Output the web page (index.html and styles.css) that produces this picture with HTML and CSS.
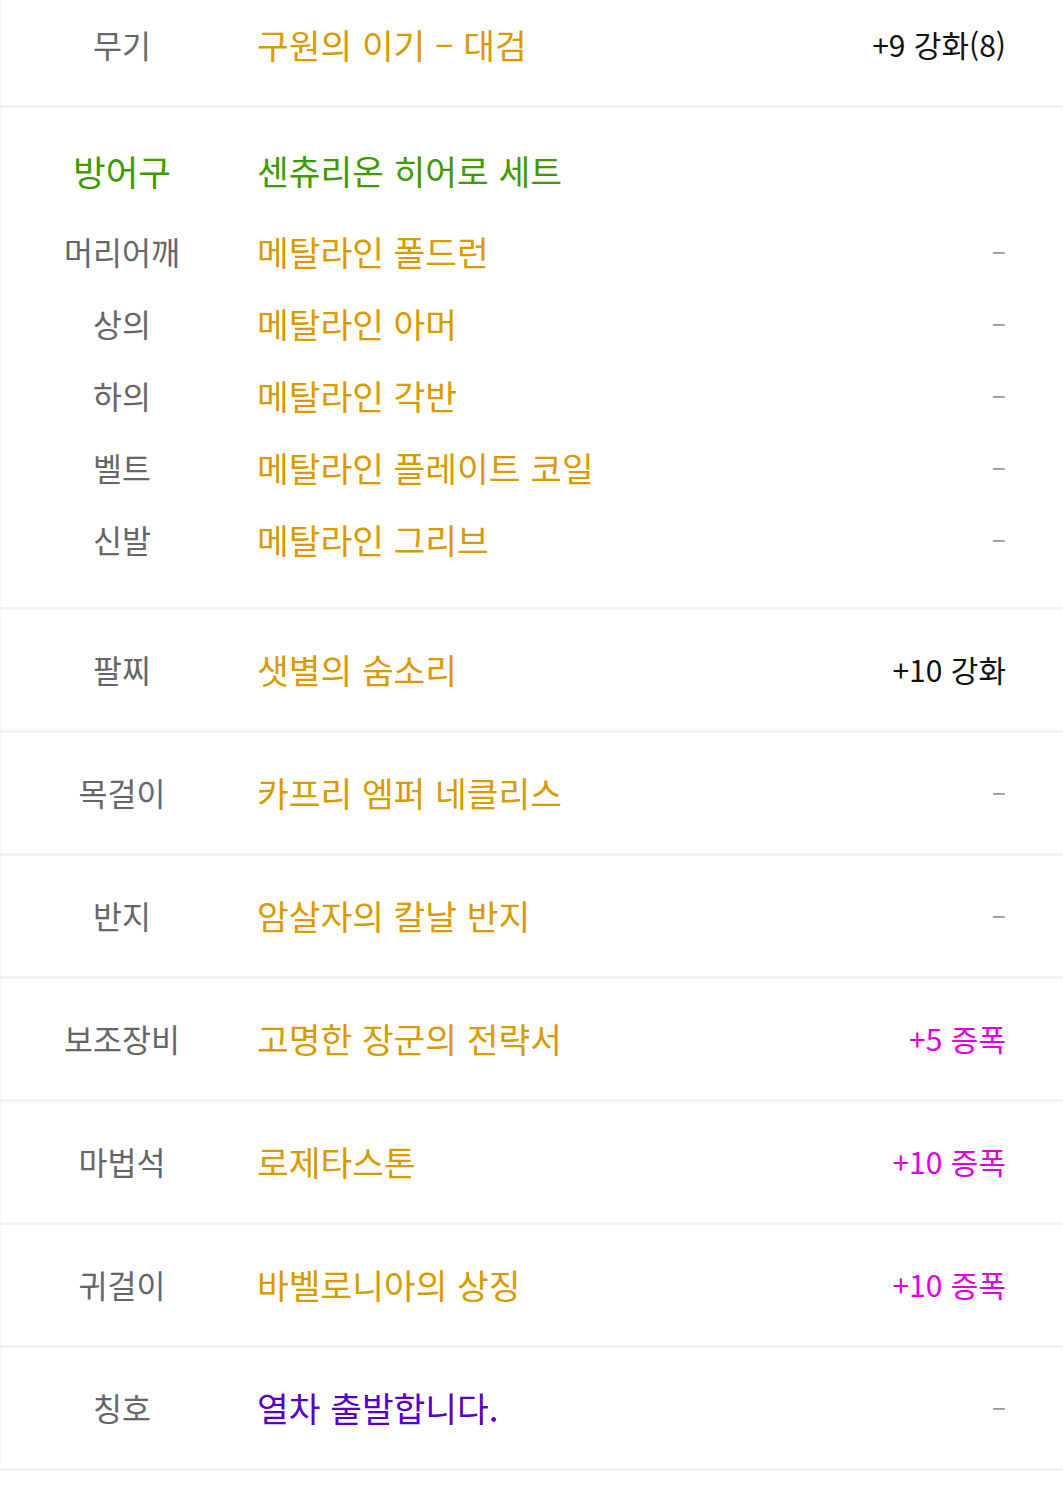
FILE: index.html
```html
<!DOCTYPE html>
<html lang="ko">
<head>
    <meta charset="UTF-8">
    <title>장비</title>
    <link rel="stylesheet" href="styles.css">
</head>
<body>
    <div class="equipList">
        <div class="row">
            <span class="slot">무기</span>
            <span class="itemName">구원의 이기 – 대검</span>
            <span class="extra">+9 강화(8)</span>
        </div>

        <div class="setBlock">
            <div class="setHead">
                <span class="setSlot">방어구</span>
                <span class="setName">센츄리온 히어로 세트</span>
            </div>
            <div class="subRow">
                <span class="slot">머리어깨</span>
                <span class="itemName">메탈라인 폴드런</span>
                <span class="extra dash">–</span>
            </div>
            <div class="subRow">
                <span class="slot">상의</span>
                <span class="itemName">메탈라인 아머</span>
                <span class="extra dash">–</span>
            </div>
            <div class="subRow">
                <span class="slot">하의</span>
                <span class="itemName">메탈라인 각반</span>
                <span class="extra dash">–</span>
            </div>
            <div class="subRow">
                <span class="slot">벨트</span>
                <span class="itemName">메탈라인 플레이트 코일</span>
                <span class="extra dash">–</span>
            </div>
            <div class="subRow">
                <span class="slot">신발</span>
                <span class="itemName">메탈라인 그리브</span>
                <span class="extra dash">–</span>
            </div>
        </div>

        <div class="row">
            <span class="slot">팔찌</span>
            <span class="itemName">샛별의 숨소리</span>
            <span class="extra">+10 강화</span>
        </div>
        <div class="row">
            <span class="slot">목걸이</span>
            <span class="itemName">카프리 엠퍼 네클리스</span>
            <span class="extra dash">–</span>
        </div>
        <div class="row">
            <span class="slot">반지</span>
            <span class="itemName">암살자의 칼날 반지</span>
            <span class="extra dash">–</span>
        </div>
        <div class="row">
            <span class="slot">보조장비</span>
            <span class="itemName">고명한 장군의 전략서</span>
            <span class="extra amp">+5 증폭</span>
        </div>
        <div class="row">
            <span class="slot">마법석</span>
            <span class="itemName">로제타스톤</span>
            <span class="extra amp">+10 증폭</span>
        </div>
        <div class="row">
            <span class="slot">귀걸이</span>
            <span class="itemName">바벨로니아의 상징</span>
            <span class="extra amp">+10 증폭</span>
        </div>
        <div class="row">
            <span class="slot">칭호</span>
            <span class="itemName title">열차 출발합니다.</span>
            <span class="extra dash">–</span>
        </div>
    </div>
</body>
</html>
```

FILE: styles.css
```css
*{
    margin: 0;
    padding: 0;
    box-sizing: border-box;
}
body{
    background-color: #fff;
    font-family: "Noto Sans CJK KR", "Noto Sans", sans-serif;
    overflow: hidden;
}
/* 목록이 살짝 스크롤된 상태 */
.equipList{
    margin-top: -15px;
}
.row, .subRow, .setHead{
    display: grid;
    grid-template-columns: 242px 1fr auto;
    column-gap: 14px;
    align-items: center;
    padding-right: 57px;
}
.row{
    height: 123px;
    padding-bottom: 2px;
    border-bottom: 3px solid #f2f2f2;
    border-left: 1px solid #f6f6f6;
}
.setBlock{
    padding: 26px 0 32px;
    border-bottom: 3px solid #f2f2f2;
    border-left: 1px solid #f6f6f6;
}
.setHead{
    height: 72px;
    margin-bottom: 9px;
}
.subRow{
    height: 72px;
}
.slot{
    text-align: center;
    font-size: 31.5px;
    color: #666;
}
.setSlot{
    text-align: center;
    font-size: 35.5px;
    color: #3d9a00;
}
.setName{
    font-size: 34.5px;
    color: #3d9a00;
}
.itemName{
    font-size: 34.5px;
    color: #d99a00;
}
.title{
    color: #5500c4;
}
.extra{
    font-size: 30px;
    color: #111;
    text-align: right;
}
.dash{
    color: #999;
    font-size: 26px;
    padding-bottom: 6px;
}
.amp{
    color: #dd00dd;
}
```
